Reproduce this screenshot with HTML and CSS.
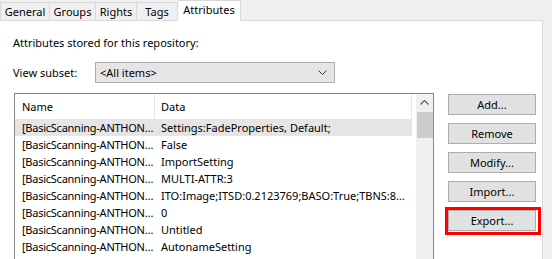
FILE: index.html
```html
<!DOCTYPE html>
<html lang="en">
<head>
    <meta charset="UTF-8">
    <title>Attributes</title>
    <link rel="stylesheet" href="styles.css">
</head>
<body>
    <div class="tabs">
        <div class="tab">General</div>
        <div class="tab">Groups</div>
        <div class="tab">Rights</div>
        <div class="tab">Tags</div>
        <div class="tab active">Attributes</div>
    </div>
    <div class="panel">
        <div class="caption">Attributes stored for this repository:</div>
        <div class="subset-row">
            <span class="subset-label">View subset:</span>
            <div class="combo">
                <span>&lt;All items&gt;</span>
                <svg class="chevron" width="9" height="5" viewBox="0 0 9 5"><path d="M0.5 0.5 L4.5 4.5 L8.5 0.5" fill="none" stroke="#333" stroke-width="1"/></svg>
            </div>
        </div>
        <div class="body">
            <div class="list">
                <div class="list-main">
                    <div class="list-head">
                        <div class="col-name">Name</div>
                        <div class="col-data">Data</div>
                    </div>
                    <div class="row selected"><div class="col-name">[BasicScanning-ANTHON…</div><div class="col-data">Settings:FadeProperties, Default;</div></div>
                    <div class="row"><div class="col-name">[BasicScanning-ANTHON…</div><div class="col-data">False</div></div>
                    <div class="row"><div class="col-name">[BasicScanning-ANTHON…</div><div class="col-data">ImportSetting</div></div>
                    <div class="row"><div class="col-name">[BasicScanning-ANTHON…</div><div class="col-data">MULTI-ATTR:3</div></div>
                    <div class="row"><div class="col-name">[BasicScanning-ANTHON…</div><div class="col-data">ITO:Image;ITSD:0.2123769;BASO:True;TBNS:8…</div></div>
                    <div class="row"><div class="col-name">[BasicScanning-ANTHON…</div><div class="col-data">0</div></div>
                    <div class="row"><div class="col-name">[BasicScanning-ANTHON…</div><div class="col-data">Untitled</div></div>
                    <div class="row"><div class="col-name">[BasicScanning-ANTHON…</div><div class="col-data">AutonameSetting</div></div>
                    <div class="row"><div class="col-name">[BasicScanning-ANTHON…</div><div class="col-data">True</div></div>
                </div>
                <div class="scrollbar">
                    <svg class="arrow" width="9" height="5" viewBox="0 0 9 5"><path d="M0.5 4.5 L4.5 0.5 L8.5 4.5" fill="none" stroke="#606060" stroke-width="1.2"/></svg>
                    <div class="thumb"></div>
                </div>
            </div>
            <div class="buttons">
                <button class="btn">Add...</button>
                <button class="btn">Remove</button>
                <button class="btn">Modify...</button>
                <button class="btn">Import...</button>
                <div class="marked">
                    <button class="btn">Export...</button>
                </div>
            </div>
        </div>
    </div>
</body>
</html>
```

FILE: styles.css
```css
body {
    margin: 0;
    background-color: #f0f0f0;
    font-family: "Noto Sans", "Segoe UI", sans-serif;
    font-size: 11px;
    color: #000;
    overflow: hidden;
    height: 259px;
}
.tabs {
    display: flex;
    align-items: flex-end;
    height: 20px;
}
.tab {
    height: 18px;
    line-height: 18px;
    text-align: center;
    border: 1px solid #d9d9d9;
    border-bottom: none;
    border-left: none;
    background-color: #f0f0f0;
    box-sizing: border-box;
}
.tab:nth-child(1) { width: 50px; border-left: 1px solid #d9d9d9; }
.tab:nth-child(2) { width: 46px; }
.tab:nth-child(3) { width: 41px; }
.tab:nth-child(4) { width: 41px; }
.tab.active {
    height: 21px;
    line-height: 17px;
    width: 63px;
    background-color: #fff;
    margin-bottom: -1px;
    position: relative;
    z-index: 1;
}
.panel {
    width: 543px;
    height: 239px;
    background-color: #fff;
    border: 1px solid #d9d9d9;
    border-left: none;
    border-bottom: none;
    box-sizing: border-box;
    padding: 12px 0 0 13px;
}
.caption {
    height: 20px;
    line-height: 20px;
}
.subset-row {
    display: flex;
    align-items: center;
    margin-top: 9px;
}
.subset-label {
    width: 82px;
}
.combo {
    width: 240px;
    height: 21px;
    box-sizing: border-box;
    border: 1px solid #adadad;
    background-color: #e5e5e5;
    display: flex;
    align-items: center;
    justify-content: space-between;
    padding: 0 7px 0 4px;
}
.chevron {
    display: block;
}
.body {
    display: flex;
    gap: 14px;
    margin-top: 10px;
    margin-left: 1px;
}
.list {
    width: 420px;
    height: 167px;
    border: 1px solid #828790;
    border-bottom: none;
    box-sizing: border-box;
    display: flex;
    background-color: #fff;
    overflow: hidden;
}
.list-main {
    flex: 1;
    padding-right: 4px;
    overflow: hidden;
}
.list-head {
    display: flex;
    height: 25px;
    align-items: center;
    border-right: 1px solid #e5e5e5;
}
.list-head .col-name {
    border-right: 1px solid #e5e5e5;
    height: 100%;
    line-height: 25px;
}
.row {
    display: flex;
    height: 17px;
    line-height: 17px;
    white-space: nowrap;
}
.row.selected {
    background-color: #e5e5e5;
}
.row .col-name {
    letter-spacing: -0.25px;
}
.col-name {
    width: 140px;
    flex-shrink: 0;
    box-sizing: border-box;
    padding-left: 7px;
    white-space: nowrap;
}
.col-data {
    padding-left: 6px;
    overflow: hidden;
}
.scrollbar {
    width: 17px;
    flex-shrink: 0;
    background-color: #f0f0f0;
    display: flex;
    flex-direction: column;
    align-items: center;
}
.arrow {
    margin-top: 6px;
}
.thumb {
    width: 16px;
    height: 26px;
    margin-top: 7px;
    background-color: #cdcdcd;
}
.buttons {
    display: flex;
    flex-direction: column;
    gap: 8px;
    padding-top: 1px;
}
.btn {
    width: 88px;
    height: 21px;
    padding: 0;
    font-family: inherit;
    font-size: 11px;
    color: #000;
    background-color: #e1e1e1;
    border: 1px solid #adadad;
    display: block;
}
.marked {
    position: relative;
}
.marked::after {
    content: "";
    position: absolute;
    left: -3px;
    top: -3px;
    width: 90px;
    height: 22px;
    border: 3px solid #ff0000;
}
```
